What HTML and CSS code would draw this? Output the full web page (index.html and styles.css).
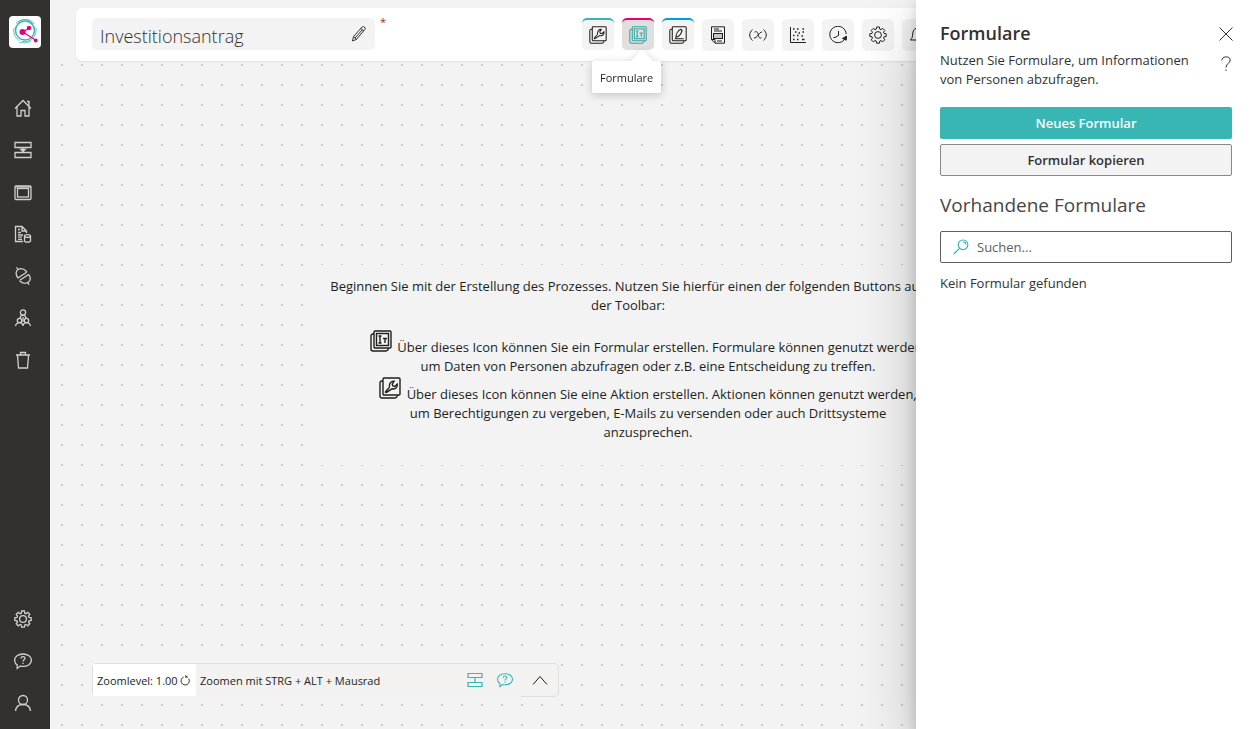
FILE: index.html
```html
<!DOCTYPE html>
<html lang="de">
<head>
<meta charset="utf-8">
<meta name="viewport" content="width=device-width, initial-scale=1">
<title>Investitionsantrag</title>
<link rel="stylesheet" href="styles.css">
</head>
<body>
<svg class="sprite" aria-hidden="true">
  <symbol id="gear" viewBox="0 0 18 18"><path d="M7.600 1h2.800l.4 2.200 1.100.5 1.900-1.300 2 2-1.300 1.800.5 1.200 2.200.4v2.600l-2.200.4-.5 1.200 1.300 1.800-2 2-1.900-1.300-1.100.5-.4 2.200H7.600l-.4-2.200-1.100-.5-1.900 1.300-2-2 1.300-1.800-.5-1.200L.8 10.400V7.800L3 7.400l.5-1.200-1.300-1.800 2-2 1.900 1.300 1.100-.5z"/><circle cx="9" cy="9" r="3.400"/></symbol>
  <symbol id="help" viewBox="0 0 18 18"><path d="M3.200 16.500v-3.600C1.300 11.800.6 10 .6 8.200c0-3.700 3.600-6.200 8.400-6.200s8.400 2.500 8.400 6.200-3.600 6.200-8.400 6.200c-1 0-2-.1-2.800-.3z"/><path d="M7 6.500c0-2.600 4-2.500 4-.2 0 1.500-2 1.500-2 3.300M9 10.800v1.200"/></symbol>
  <symbol id="wrench" viewBox="0 0 22 22"><path d="M4 4H3Q1 4 1 6v13q0 2 2 2h13q2 0 2.500-3"/><rect x="4" y="1" width="17" height="17" rx="1"/><path d="M6.500 15.500c-1-1 4.500-4.500 4-6C9.800 6.500 12.500 3.800 15 4.200L13.200 7l.6 2 2 .4L18.200 7c.8 3-1.700 5.600-4.700 4.800-1.600-.3-5.500 4.500-7 3.700z"/></symbol>
  <symbol id="form" viewBox="0 0 22 22"><path d="M4 4H3Q1 4 1 6v13q0 2 2 2h13q2 0 2.500-3"/><rect x="4" y="1" width="17" height="17" rx="1"/><rect x="6.500" y="3.500" width="12" height="12"/><path d="M8.500 6h3M10 6v7M8.500 13h3M13 8.500h4M15 8.500V13"/></symbol>
  <symbol id="sign" viewBox="0 0 22 22"><path d="M4 4H3Q1 4 1 6v13q0 2 2 2h13q2 0 2.500-3"/><rect x="4" y="1" width="17" height="17" rx="1"/><path d="M7 15.500h11M8.500 14c0-4 2.500-8.500 6-10L16 5.500c-1 3.500-3 7-6.500 8z"/></symbol>
</svg>
<div class="app">
  <nav class="sidebar" aria-label="Hauptnavigation">
    <a class="logo" href="#" aria-label="Startseite"><svg viewBox="0 0 32 32" width="32" height="32"><circle class="ring" cx="16" cy="14.500" r="9.500"/><path class="ring thin" d="M7 7.500C12 2 21 2 25.500 8M27 12c1 8-5 15-14 13.500M5 12c-1 5 1 10 5 12.500M9 6c5-3.500 11-3 15 2M10 26c4 1.500 9 1 12-1"/><path class="links" d="m14 16 6-4M14 16l13 8.500"/><circle class="node" cx="13.500" cy="16" r="3"/><circle class="node" cx="20" cy="12" r="2.200"/><circle class="node" cx="26.700" cy="24.500" r="1.900"/></svg></a>
    <div class="nav-group">
      <a href="#" aria-label="Start"><svg class="icon" viewBox="0 0 18 18"><path d="M1 9.500 9 1.500l8 8M3 8v9h4v-5.500h4V17h4V8M13 2.500h2V7"/></svg></a>
      <a href="#" aria-label="Prozesse"><svg class="icon" viewBox="0 0 18 18"><path d="M1 1.500h16v5H1zM1 11.500h16v5H1zM9 6.500v3M6.800 8.300h4.400L9 10.300z"/></svg></a>
      <a href="#" aria-label="Anwendungen"><svg class="icon" viewBox="0 0 18 18"><rect x="1" y="3" width="16" height="13.500" rx="1"/><rect x="3.500" y="5.500" width="11" height="8.500"/><path d="M1 4h16"/></svg></a>
      <a href="#" aria-label="Daten"><svg class="icon" viewBox="0 0 18 18"><path d="M9 16.500H1.500v-15H8l4.500 4.500v2M8 1.500V6h4.500M4 4.500h2M4 7.500h3M4 10h5M4 12.200h4M4 14.400h4"/><path d="M10.500 11v5c0 1.500 6 1.500 6 0v-5"/><ellipse cx="13.500" cy="11" rx="3" ry="1.400"/></svg></a>
      <a href="#" aria-label="Verbindungen"><svg class="icon" viewBox="0 0 18 18"><path d="m4 11 9-6M5.500 13.500l9-6M4 11C1.300 7.500 1.500 4 4.500 2.300 8 .7 10.500 2 13 5M5.500 13.500c2.500 3 5.500 3.500 8.500 1.800s3-5 .5-7.800M4 2.500 2.500.3M14 15.500l1 2.200"/></svg></a>
      <a href="#" aria-label="Gruppen"><svg class="icon" viewBox="0 0 18 18"><circle cx="9" cy="3.500" r="2.600"/><path d="M5.800 9.500C6.300 7.300 7.300 6.100 9 6.100s2.700 1.200 3.200 3.400M9 8v5"/><circle cx="5.500" cy="11.500" r="2.200"/><circle cx="12.500" cy="11.500" r="2.200"/><path d="M1.500 17c.5-2.300 2-3.300 4-3.300S8.700 14.700 9 17c.3-2.300 1.500-3.300 3.500-3.300s3.500 1 4 3.300"/></svg></a>
      <a href="#" aria-label="Papierkorb"><svg class="icon" viewBox="0 0 18 18"><path d="M2 4h14M6.500 4V1.500h5V4M3.500 4.500l1 12.500h9l1-12.500"/></svg></a>
    </div>
    <div class="nav-group">
      <a href="#" aria-label="Einstellungen"><svg class="icon"><use href="#gear"/></svg></a>
      <a href="#" aria-label="Hilfe"><svg class="icon"><use href="#help"/></svg></a>
      <a href="#" aria-label="Profil"><svg class="icon" viewBox="0 0 18 18"><circle cx="9" cy="6" r="4.500"/><path d="M1.500 17c.5-4.500 3.500-6.500 7.500-6.500s7 2 7.500 6.500"/></svg></a>
    </div>
  </nav>

  <main class="canvas">
    <div class="header">
      <div class="toolbar">
        <div class="title-area">
          <div class="title-field">
            <input type="text" value="Investitionsantrag" aria-label="Prozessname">
            <svg class="icon" viewBox="0 0 18 18"><path d="m2.500 16 1-4.500L12.300 1.800c1.200-1 3.800 1 2.700 2.500L6.500 14.300zM3.500 11.500l3 2.800M10.800 3.500l3.200 2.700M5 13l7.300-8.200"/></svg>
          </div>
          <span class="required">*</span>
        </div>
        <div class="tools">
          <button class="tool teal" aria-label="Aktionen"><svg class="icon stacked"><use href="#wrench"/></svg></button>
          <div class="tool-wrap">
            <button class="tool pink active" aria-label="Formulare" aria-describedby="tip"><svg class="icon stacked"><use href="#form"/></svg></button>
            <div class="tooltip" id="tip" role="tooltip">Formulare</div>
          </div>
          <button class="tool blue" aria-label="Signaturen"><svg class="icon stacked"><use href="#sign"/></svg></button>
          <button class="tool" aria-label="Dokumente"><svg class="icon" viewBox="0 0 18 18"><path d="M2.500.8h13v16.400H6l-3.500-3.500zM2.500 13.500H6V17M5 3h5M5 5h8M8 15h5"/><rect class="shade" x="4.500" y="7.500" width="9" height="5"/></svg></button>
          <button class="tool" aria-label="Variablen"><svg class="icon" viewBox="0 0 18 18"><path d="M3.500 3.500C-.2 7-.2 11 3.500 14.500M14.500 3.500c3.700 3.500 3.700 7.500 0 11M5.500 6.200C8 4.500 9 7 9.300 9s1.200 4 3.200 2.700M13 6C10.500 5.500 8 12.500 5 12"/></svg></button>
          <button class="tool" aria-label="Auswertung"><svg class="icon" viewBox="0 0 18 18"><path d="M1.500 1v15.500H17"/><path class="dots" d="M4 3h1.500M8 3h1.500M13.500 3H15M6 6h1.500M9.500 7H11M13.500 6H15M4 9.500h1.500M8 9.500h1.500M12.500 10H14M4 13.500h1.500M8 13.500h1.500M13 13.500h2.500"/></svg></button>
          <button class="tool" aria-label="Verlauf"><svg class="icon" viewBox="0 0 18 18"><path d="M15.500 13.500A8.200 8.200 0 1 1 17.200 8M9.500 5v4.500L6 11.500M4.500 11.500H6"/><path class="solid" d="m17.500 10.200-.3 4-3.700-1.700z"/></svg></button>
          <button class="tool" aria-label="Einstellungen"><svg class="icon"><use href="#gear"/></svg></button>
          <button class="tool" aria-label="Benachrichtigungen"><svg class="icon" viewBox="0 0 18 18"><path d="M1.500 14c2-2 2-4 2.300-7C4.200 3.800 6 2 9 2s4.800 1.800 5.200 5c.3 3 .3 5 2.300 7zM7 14.500c.5 2 3.500 2 4 0"/></svg></button>
        </div>
      </div>
    </div>

    <div class="stage">
      <section class="intro">
        <p>Beginnen Sie mit der Erstellung des Prozesses. Nutzen Sie hierfür einen der folgenden Buttons aus<br>der Toolbar:</p>
        <ul>
          <li><svg class="icon"><use href="#form"/></svg> Über dieses Icon können Sie ein Formular erstellen. Formulare können genutzt werden,<br>um Daten von Personen abzufragen oder z.B. eine Entscheidung zu treffen.</li>
          <li><svg class="icon"><use href="#wrench"/></svg> Über dieses Icon können Sie eine Aktion erstellen. Aktionen können genutzt werden,<br>um Berechtigungen zu vergeben, E-Mails zu versenden oder auch Drittsysteme<br>anzusprechen.</li>
        </ul>
      </section>
    </div>

    <footer class="zoombar">
      <div class="zoomlevel">Zoomlevel: 1.00
        <button aria-label="Zoom zurücksetzen"><svg class="icon" viewBox="0 0 12 12"><path d="M4 2.200A4.500 4.500 0 1 0 9.500 4M5.500.5l2.700 1.800H5.500"/></svg></button>
      </div>
      <span class="zoomhint">Zoomen mit STRG + ALT + Mausrad</span>
      <button class="mini" aria-label="Ausrichten"><svg class="icon" viewBox="0 0 16 16"><path d="M1 1.500h14v4H1zM1 10.500h14v4H1zM8 5.500v5"/></svg></button>
      <button class="mini" aria-label="Hilfe"><svg class="icon"><use href="#help"/></svg></button>
      <button class="collapse" aria-label="Aufklappen"><svg class="icon" viewBox="0 0 16 16"><path d="m1 12.500 7-8 7 8"/></svg></button>
    </footer>
  </main>

  <aside class="panel">
    <header class="panel-head">
      <h2>Formulare</h2>
      <button class="close" aria-label="Schließen"><svg class="icon" viewBox="0 0 14 14"><path d="m.5.500 13 13M13.500.500l-13 13"/></svg></button>
      <p>Nutzen Sie Formulare, um Informationen von Personen abzufragen.</p>
      <button class="question" aria-label="Hilfe"><svg class="icon" viewBox="0 0 10 16"><path d="M.8 4.500C.8-.3 9.200-.3 9.200 4c0 3.300-4.200 3.500-4.200 7.500M5 13.500V15"/></svg></button>
    </header>
    <div class="actions">
      <button class="primary">Neues Formular</button>
      <button class="secondary">Formular kopieren</button>
    </div>
    <h3>Vorhandene Formulare</h3>
    <label class="search">
      <svg class="icon" viewBox="0 0 16 16"><circle cx="10" cy="5.800" r="4.800"/><path d="M6.500 9.300.8 15M10 3c1.700 0 2.800 1 2.800 2.500"/></svg>
      <input type="search" placeholder="Suchen..." aria-label="Suchen">
    </label>
    <p class="empty">Kein Formular gefunden</p>
  </aside>
</div>
</body>
</html>
```
FILE: styles.css
```css
* { box-sizing: border-box; }

body {
  margin: 0;
  font: 13px/19px "Open Sans", "Noto Sans", sans-serif;
  color: #201f1e;
}

h2, h3, p, ul { margin: 0; padding: 0; }

button, input { font: inherit; color: inherit; }

button { padding: 0; border: 0; background: none; }

.sprite { position: absolute; width: 0; height: 0; }

.icon {
  display: block;
  width: 18px;
  height: 18px;
  fill: none;
  stroke: currentColor;
  stroke-width: 1;
}

.app {
  position: relative;
  display: flex;
  min-height: 100vh;
  overflow: hidden;
}

/* Sidebar */
.sidebar {
  display: flex;
  flex-direction: column;
  flex: 0 0 50px;
  padding: 16px 4px 5px 0;
  background: #323130;
  color: #d2d0ce;
}

.logo {
  display: block;
  width: 32px;
  height: 32px;
  margin: 0 0 39px 9px;
  border-radius: 4px;
  background: #fff;
}

.ring { fill: none; stroke: #37b6b4; stroke-width: 1.5; }
.thin { stroke-width: 0.8; }
.links { stroke: #e6007e; stroke-width: 1.1; }
.node { fill: #e6007e; }

.nav-group:last-child { margin-top: auto; }

.nav-group a {
  display: flex;
  align-items: center;
  justify-content: center;
  height: 42px;
  color: inherit;
}

.nav-group .icon { stroke-width: 1.3; }

/* Process canvas with its dot grid */
.canvas {
  display: flex;
  flex: 1;
  flex-direction: column;
  min-width: 0;
  background-color: #f3f3f3;
  background-image:
    linear-gradient(90deg, transparent 2px, #f3f3f3 2px),
    linear-gradient(#ccc 2px, #f3f3f3 2px);
  background-position: 11px 4px;
  background-size: 20px 20px;
}

.header { padding: 8px 16px 1px 26px; background: #f3f3f3; }

.toolbar {
  display: grid;
  grid-template-columns: 490px 1fr;
  padding: 10px 16px;
  border-radius: 6px;
  background: #fff;
  box-shadow: 0 1px 2px rgba(0, 0, 0, 0.08);
}

.title-area { display: flex; gap: 5px; }

.title-field {
  display: flex;
  align-items: center;
  width: 283px;
  height: 32px;
  padding-right: 7px;
  border-radius: 5px;
  background: #f3f3f3;
  color: #323130;
}

.title-field input {
  flex: 1;
  min-width: 0;
  height: 32px;
  padding: 4px 8px 0;
  border: 0;
  background: none;
  font-size: 18px;
  font-weight: 300;
  line-height: 28px;
}

.required { margin-top: -6px; color: #a4262c; font-size: 11px; }

.tools { display: flex; gap: 8px; height: 33px; }

.tool-wrap { position: relative; }

.tool {
  display: flex;
  flex: 0 0 32px;
  align-items: center;
  justify-content: center;
  align-self: flex-end;
  width: 32px;
  height: 32px;
  border-radius: 5px;
  background: #f3f3f3;
}

.teal, .pink, .blue { align-self: flex-start; border-top: 2px solid; }
.teal { border-color: #37b6b4; }
.pink { border-color: #e6007e; }
.blue { border-color: #009fe3; }
.active { background: #e1dfdd; color: #37a5a3; }
.stacked { stroke-width: 1.3; }
.dots { stroke-width: 1.6; }
.solid { fill: currentColor; }
.shade { fill: #c8c6c4; }

.tooltip {
  position: absolute;
  z-index: 2;
  top: 43px;
  left: -30px;
  padding: 7px 8px 6px;
  border-radius: 2px;
  background: #fff;
  filter: drop-shadow(0 2px 4px rgba(0, 0, 0, 0.2));
  font-size: 11px;
}

.tooltip::before {
  content: "";
  position: absolute;
  top: -11px;
  left: 39px;
  border: 11px solid transparent;
  border-top-width: 0;
  border-bottom-color: #fff;
}

.stage {
  display: flex;
  flex: 1;
  align-items: center;
  justify-content: center;
  padding: 4px 50px 0 0;
}

.intro {
  width: 50vw;
  padding: 12px 0 23px;
  background: #f3f3f3;
  text-align: center;
  white-space: nowrap;
}

.intro p, .intro li { margin: 0 -20px; }
.intro ul { padding: 15px 0 0 40px; list-style: none; }
.intro .icon {
  display: inline-block;
  width: 22px;
  height: 22px;
  margin-right: 2px;
  stroke-width: 1.4;
}
.intro li + li { margin-top: 1px; }

/* Zoom bar */
.zoombar {
  display: flex;
  align-items: center;
  align-self: flex-start;
  width: 467px;
  height: 34px;
  margin: 0 0 32px 42px;
  border: 1px solid #e1dfdd;
  border-bottom-color: transparent;
  border-radius: 5px;
  background: #f3f2f1;
  font-size: 11px;
}

.zoomlevel {
  display: flex;
  align-items: center;
  justify-content: space-between;
  width: 103px;
  height: 32px;
  padding: 0 5px 0 4px;
  background: #fff;
}

.zoomlevel .icon { width: 11px; height: 11px; }
.zoomhint { flex: 1; padding-left: 4px; }
.mini { margin-right: 14px; color: #37b6b4; }
.mini .icon { width: 16px; height: 16px; stroke-width: 1.2; }

.collapse {
  display: grid;
  place-items: center;
  align-self: stretch;
  width: 38px;
  margin: 0 -1px -1px -6px;
  border-bottom: 1px solid #e1dfdd;
  border-radius: 0 0 5px 0;
}

.collapse .icon { width: 16px; height: 16px; }

/* Side panel over the canvas */
.panel {
  position: absolute;
  z-index: 3;
  top: 0;
  right: 0;
  bottom: 0;
  width: 340px;
  padding: 20px 24px;
  background: #fff;
  box-shadow: 0 26px 58px rgba(0, 0, 0, 0.22), 0 5px 14px rgba(0, 0, 0, 0.18);
  color: #323130;
}

.panel-head {
  display: grid;
  grid-template-columns: 1fr 14px;
  column-gap: 20px;
  margin-right: -1px;
}

.panel-head p { margin-top: 4px; margin-right: -6px; }

.panel h2 { font-size: 18px; font-weight: 600; line-height: 27px; }

.close .icon { width: 14px; height: 14px; }
.question { align-self: start; justify-self: center; margin-top: 9px; }
.question .icon { width: 10px; height: 16px; }

.actions { display: grid; gap: 5px; margin-top: 18px; }

.actions button { height: 32px; border-radius: 2px; font-weight: 600; }
.primary { background: #37b6b4; color: #fff; }
.actions .secondary { border: 1px solid #8a8886; background: #f3f3f3; }

.panel h3 {
  margin: 15px 0 12px;
  color: #484644;
  font-size: 19px;
  font-weight: 400;
  line-height: 28px;
}

.search {
  display: flex;
  align-items: center;
  gap: 8px;
  height: 32px;
  padding: 0 12px;
  border: 1px solid #605e5c;
  border-radius: 2px;
}

.search .icon { width: 16px; height: 16px; color: #37b6b4; stroke-width: 1.2; }

.search input {
  flex: 1;
  min-width: 0;
  padding: 0;
  border: 0;
  background: none;
}

.search input::placeholder { color: #605e5c; }

.empty { margin-top: 11px; }
```
